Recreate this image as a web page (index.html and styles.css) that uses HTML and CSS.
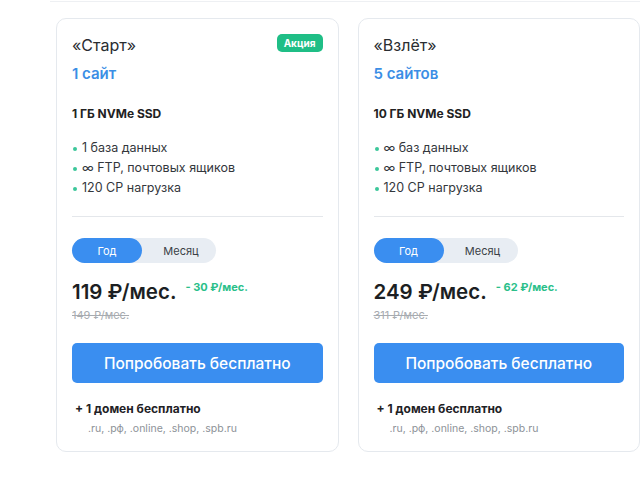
FILE: index.html
```html
<!DOCTYPE html>
<html lang="ru">
<head>
<meta charset="utf-8">
<link rel="stylesheet" href="styles.css">
</head>
<body>
<div class="topline"></div>
<div class="cards">
  <div class="card">
    <div class="head">
      <div class="name">«Старт»</div>
      <div class="badge">Акция</div>
    </div>
    <div class="sites">1 сайт</div>
    <div class="disk">1 ГБ NVMe SSD</div>
    <ul class="feats">
      <li>1 база данных</li>
      <li>∞ FTP, почтовых ящиков</li>
      <li>120 CP нагрузка</li>
    </ul>
    <div class="divider"></div>
    <div class="toggle"><span class="opt active">Год</span><span class="opt">Месяц</span></div>
    <div class="price-row"><span class="price">119 ₽/мес.</span><span class="save">- 30 ₽/мес.</span></div>
    <div class="old">149 ₽/мес.</div>
    <div class="btn">Попробовать бесплатно</div>
    <div class="domain">+ 1 домен бесплатно</div>
    <div class="zones">.ru, .рф, .online, .shop, .spb.ru</div>
  </div>
  <div class="card">
    <div class="head">
      <div class="name">«Взлёт»</div>
    </div>
    <div class="sites">5 сайтов</div>
    <div class="disk">10 ГБ NVMe SSD</div>
    <ul class="feats">
      <li>∞ баз данных</li>
      <li>∞ FTP, почтовых ящиков</li>
      <li>120 CP нагрузка</li>
    </ul>
    <div class="divider"></div>
    <div class="toggle"><span class="opt active">Год</span><span class="opt">Месяц</span></div>
    <div class="price-row"><span class="price">249 ₽/мес.</span><span class="save">- 62 ₽/мес.</span></div>
    <div class="old">311 ₽/мес.</div>
    <div class="btn">Попробовать бесплатно</div>
    <div class="domain">+ 1 домен бесплатно</div>
    <div class="zones">.ru, .рф, .online, .shop, .spb.ru</div>
  </div>
</div>
</body>
</html>
```
FILE: styles.css
```css
* { box-sizing: border-box; }
html, body { margin: 0; padding: 0; background: #fff; }
body {
  font-family: Inter, "Open Sans", "Noto Sans", sans-serif;
  color: #1f2328;
  width: 640px;
  height: 478px;
  overflow: hidden;
}
.topline {
  margin-left: 50px;
  height: 2px;
  border-bottom: 1px solid #eef0f3;
}
.cards {
  display: flex;
  gap: 19px;
  padding: 16px 0 0 56px;
}
.card {
  width: 283px;
  height: 434px;
  border: 1px solid #e5e9ee;
  border-radius: 10px;
  padding: 15px 15px 0 15px;
  display: flex;
  flex-direction: column;
}
.head {
  display: flex;
  justify-content: space-between;
  align-items: center;
  height: 22px;
}
.name {
  font-size: 16px;
  color: #2a2d31;
  line-height: 22px;
  margin-top: 0px;
}
.badge {
  background: #1fbe86;
  color: #fff;
  font-size: 10px;
  font-weight: 700;
  padding: 0 7px;
  height: 18px;
  line-height: 18px;
  border-radius: 5px;
  margin-top: -5px;
}
.sites {
  margin-top: 7px;
  font-size: 15px;
  font-weight: 600;
  color: #3b8ee5;
  line-height: 22px;
}
.disk {
  margin-top: 21px;
  font-size: 12px;
  font-weight: 700;
  line-height: 16px;
  color: #222;
}
.feats {
  list-style: none;
  margin: 16px 0 0 0;
  padding: 0;
}
.feats li {
  position: relative;
  font-size: 12.5px;
  line-height: 20px;
  padding-left: 10px;
  color: #33373c;
}
.feats li::before {
  content: "";
  position: absolute;
  left: 1px;
  top: 9px;
  width: 4px;
  height: 4px;
  border-radius: 50%;
  background: #3cc79a;
}
.divider {
  margin-top: 18px;
  height: 1px;
  background: #e4e7eb;
}
.toggle {
  margin-top: 21px;
  display: flex;
  width: 144px;
  height: 25px;
  border-radius: 13px;
  background: #e8edf3;
}
.opt {
  flex: 1;
  display: flex;
  align-items: center;
  justify-content: center;
  font-size: 11px;
  color: #3a3f46;
  border-radius: 13px;
}
.opt.active {
  flex: 0 0 70px;
  background: #3a8ef0;
  color: #fff;
}
.opt:not(.active) { padding-left: 4px; }
.price-row {
  margin-top: 14px;
  display: flex;
  align-items: flex-start;
  gap: 9px;
}
.price {
  font-size: 20.5px;
  font-weight: 600;
  color: #1c1f23;
  line-height: 30px;
}
.save {
  font-size: 11px;
  font-weight: 700;
  color: #2bbf8a;
  margin-top: 3px;
}
.old {
  font-size: 11px;
  color: #a7abb0;
  text-decoration: line-through;
  line-height: 14px;
  margin-top: 1px;
}
.btn {
  margin-top: 21px;
  height: 40px;
  border-radius: 5px;
  background: #3a8ef0;
  color: #fff;
  font-size: 15.5px;
  font-weight: 500;
  display: flex;
  align-items: center;
  justify-content: center;
}
.domain {
  margin-top: 18px;
  margin-left: 3px;
  font-size: 12px;
  font-weight: 700;
  color: #1f2226;
  line-height: 16px;
}
.zones {
  margin-top: 5px;
  margin-left: 16px;
  font-size: 10.5px;
  color: #8d9298;
  line-height: 14px;
}
```
